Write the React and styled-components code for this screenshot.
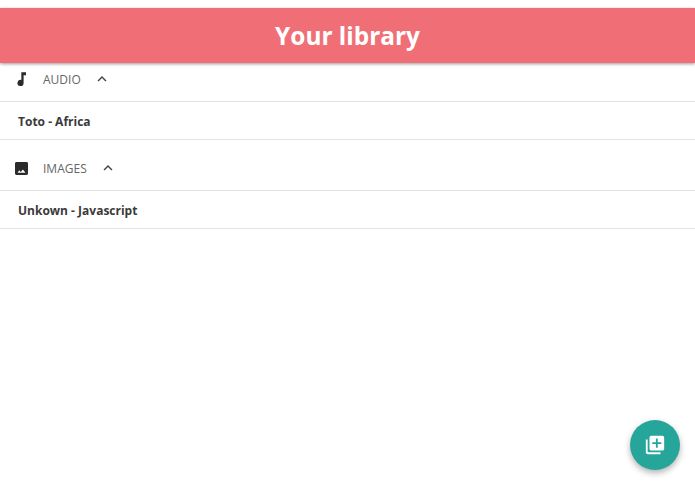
import React from "react";
import styled, { createGlobalStyle } from "styled-components";

const Global = createGlobalStyle`
  html, body { margin: 0; padding: 0; background: #fff; }
  body { font-family: "Open Sans", "Noto Sans", sans-serif; }
`;
const Page = styled.div`
  position: relative;
  width: 695px;
  height: 494px;
  padding-top: 8px;
  box-sizing: border-box;
  overflow: hidden;
`;
const Header = styled.header`
  height: 55px;
  padding-top: 2px;
  box-sizing: border-box;
  background: #f06f76;
  box-shadow: 0 1px 3px rgba(0,0,0,.4);
  display: flex;
  align-items: center;
  justify-content: center;
  position: relative;
`;
const Title = styled.h1`
  margin: 0;
  color: #fff;
  font: 700 24.4px/1 "Open Sans", sans-serif;
`;
const SectionHead = styled.div`
  height: ${p => p.$h}px;
  padding: ${p => p.$pt}px 0 ${p => p.$pb}px;
  display: flex;
  align-items: center;
  border-bottom: 1px solid #e2e2e2;
  box-sizing: border-box;
`;
const IconSlot = styled.span`
  width: 43px;
  padding-left: ${p => p.$pl}px;
  box-sizing: border-box;
  display: flex;
  color: #2b2b2b;
`;
const Label = styled.span`
  padding-top: 2px;
  font: 400 12px/1 "Open Sans", sans-serif;
  color: #666;
  text-transform: uppercase;
`;
const Chevron = styled.svg`
  width: 18px;
  height: 18px;
  margin-left: 12px;
  fill: #444;
`;
const Row = styled.div`
  height: 38px;
  padding: 3px 0 0 18px;
  display: flex;
  align-items: center;
  border-bottom: 1px solid #e2e2e2;
  box-sizing: border-box;
  font: 700 12px/1 "Open Sans", sans-serif;
  color: #3a3a3a;
`;
const Fab = styled.button`
  position: absolute;
  left: 630px;
  top: 420px;
  width: 50px;
  height: 50px;
  border: 0;
  padding: 0;
  border-radius: 50%;
  background: #26a69a;
  box-shadow: 0 3px 6px rgba(0,0,0,.3);
  display: flex;
  align-items: center;
  justify-content: center;
`;
const Up = () => (
  <Chevron viewBox="0 0 24 24"><path d="M12 8l-6 6 1.41 1.41L12 10.83l4.59 4.58L18 14z" /></Chevron>
);
export default function App() {
  return (
    <Page>
      <Global />
      <Header><Title>Your library</Title></Header>
      <SectionHead $h={39} $pt={0} $pb={6}>
        <IconSlot $pl={14}>
          <svg width="16" height="16" viewBox="0 0 24 24" fill="currentColor"><path d="M11 2v11.55A4.6 4.6 0 1 0 14.4 18V6.5H18V2h-7z" /></svg>
        </IconSlot>
        <Label>Audio</Label>
        <Up />
      </SectionHead>
      <Row>Toto - Africa</Row>
      <SectionHead $h={51} $pt={6} $pb={0}>
        <IconSlot $pl={15}>
          <svg width="13" height="13" viewBox="3 3 18 18" fill="currentColor"><path fillRule="evenodd" d="M21 19V5a2 2 0 0 0-2-2H5a2 2 0 0 0-2 2v14a2 2 0 0 0 2 2h14a2 2 0 0 0 2-2zM9 14.5l2 2.4 3-3.4 3.5 4.5h-11L9 14.5z" /></svg>
        </IconSlot>
        <Label>Images</Label>
        <Up />
      </SectionHead>
      <Row>Unkown - Javascript</Row>
      <Fab aria-label="Add">
        <svg width="22" height="22" viewBox="0 0 24 24" fill="#fff"><path d="M4 6H2v14a2 2 0 0 0 2 2h14v-2H4V6zm16-4H8a2 2 0 0 0-2 2v12a2 2 0 0 0 2 2h12a2 2 0 0 0 2-2V4a2 2 0 0 0-2-2zm-1 9h-4v4h-2v-4H9V9h4V5h2v4h4v2z" /></svg>
      </Fab>
    </Page>
  );
}
